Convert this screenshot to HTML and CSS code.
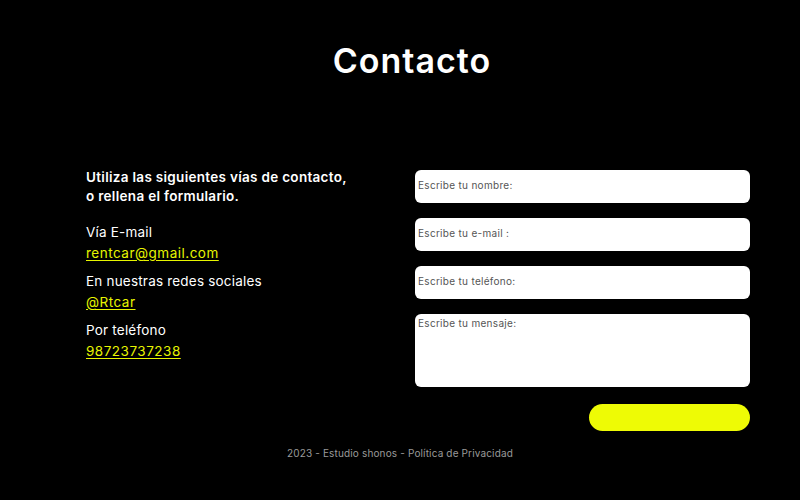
FILE: index.html
```html
<!DOCTYPE html>
<html lang="es">
<head>
<meta charset="utf-8">
<title>Contacto</title>
<link rel="stylesheet" href="styles.css">
</head>
<body>
<main class="page">
  <h1 class="title">Contacto</h1>
  <section class="contact">
    <div class="info">
      <p class="intro">Utiliza las siguientes vías de contacto,<br>o rellena el formulario.</p>
      <div class="group">
        <span class="label">Vía E-mail</span>
        <a class="link" href="#">rentcar@gmail.com</a>
      </div>
      <div class="group">
        <span class="label">En nuestras redes sociales</span>
        <a class="link" href="#">@Rtcar</a>
      </div>
      <div class="group">
        <span class="label">Por teléfono</span>
        <a class="link" href="#">98723737238</a>
      </div>
    </div>
    <form class="form">
      <input class="field" type="text" placeholder="Escribe tu nombre:">
      <input class="field" type="email" placeholder="Escribe tu e-mail :">
      <input class="field" type="tel" placeholder="Escribe tu teléfono:">
      <textarea class="field area" placeholder="Escribe tu mensaje:"></textarea>
      <div class="actions"><button class="send" type="button"></button></div>
    </form>
  </section>
  <footer class="footer">2023 - Estudio shonos - Política de Privacidad</footer>
</main>
</body>
</html>
```
FILE: styles.css
```css
* { box-sizing: border-box; }
html, body { margin: 0; padding: 0; background: #000; }
body {
  font-family: "Inter", "Open Sans", sans-serif;
  color: #fff;
  width: 800px;
  height: 500px;
  overflow: hidden;
}
.page { display: flex; flex-direction: column; }
.title {
  margin: 40px 0 0;
  padding-left: 24px;
  text-align: center;
  font-size: 34px;
  font-weight: 600;
  line-height: 42px;
  letter-spacing: 1px;
}
.contact {
  display: flex;
  padding: 86px 50px 0 86px;
}
.info {
  width: 329px;
  display: flex;
  flex-direction: column;
}
.intro {
  margin: 0 0 16px;
  font-size: 13.5px;
  font-weight: 600;
  line-height: 19px;
  letter-spacing: 0.3px;
}
.group {
  display: flex;
  flex-direction: column;
  margin-bottom: 7px;
}
.label, .link {
  font-size: 13.5px;
  line-height: 21px;
  font-weight: 400;
  letter-spacing: 0.2px;
}
.link {
  color: #e7f500;
  text-decoration: underline;
  text-underline-offset: 2px;
  letter-spacing: 0.5px;
}
.form {
  flex: 1;
  display: flex;
  flex-direction: column;
  gap: 15px;
  padding-top: 2px;
}
.field {
  display: block;
  width: 100%;
  height: 33px;
  border: none;
  border-radius: 6px;
  background: #fff;
  padding: 0 3px 3px;
  font-family: "Inter", "Open Sans", sans-serif;
  font-size: 10px;
  letter-spacing: 0.3px;
  outline: none;
}
.field::placeholder { color: #555; }
.area {
  height: 73px;
  padding: 3px 3px;
  resize: none;
}
.actions {
  display: flex;
  justify-content: flex-end;
  padding-top: 2px;
}
.send {
  width: 161px;
  height: 27px;
  border: none;
  border-radius: 14px;
  background: #eefb05;
}
.footer {
  margin-top: 16px;
  text-align: center;
  font-size: 10px;
  letter-spacing: 0.15px;
  color: #9a9a9a;
}
```
